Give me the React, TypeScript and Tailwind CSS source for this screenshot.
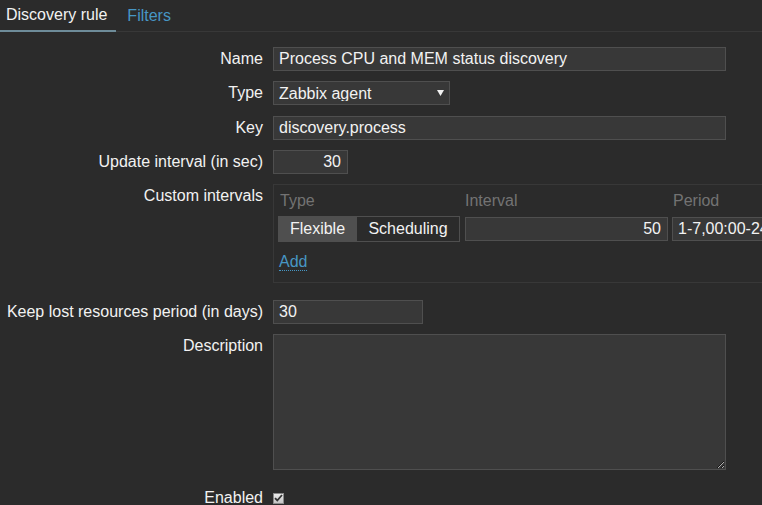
import React from "react";

function Row({
  label,
  children,
  className = "",
  labelClass = "h-[24px] leading-[24px]",
}: {
  label: string;
  children: React.ReactNode;
  className?: string;
  labelClass?: string;
}) {
  return (
    <div className={"flex " + className}>
      <div className={"w-[263px] shrink-0 text-right whitespace-nowrap " + labelClass}>{label}</div>
      <div className="ml-[10px] shrink-0">{children}</div>
    </div>
  );
}

const inputCls =
  "h-[24px] border border-[#4f4f4f] bg-[#383838] px-[5px] text-[16px] text-[#f2f2f2] outline-none font-['Liberation_Sans',Arial,sans-serif]";

export default function App() {
  return (
    <div className="w-[762px] h-[505px] overflow-hidden bg-[#2b2b2b] text-[#f2f2f2] text-[16px] font-['Liberation_Sans',Arial,sans-serif]">
      {/* Tabs */}
      <div className="flex border-b border-[#383838]">
        <div className="h-[32px] -mb-px flex items-center pl-[6px] pr-[9px] border-b-2 border-[#6e8c99] text-[#f2f2f2]">
          Discovery rule
        </div>
        <div className="h-[32px] -mb-px flex items-center pl-[11px] pr-[9px] text-[#4796c4]">Filters</div>
      </div>

      <div className="pt-[15px]">
        <Row label="Name" className="mb-[10px]">
          <input readOnly value="Process CPU and MEM status discovery" className={inputCls + " w-[453px]"} />
        </Row>

        <Row label="Type" className="mb-[11px]">
          <div className="relative h-[24px] w-[177px] border border-[#4f4f4f] bg-[#383838] px-[5px]">
            <div className="h-[19px] overflow-hidden pt-[3px] leading-[18px] whitespace-nowrap">Zabbix agent</div>
            <svg className="absolute left-[163px] top-[8px]" width="7" height="6" viewBox="0 0 7 6">
              <path d="M0 0 H7 L3.5 6 Z" fill="#f2f2f2" />
            </svg>
          </div>
        </Row>

        <Row label="Key" className="mb-[10px]">
          <input readOnly value="discovery.process" className={inputCls + " w-[453px]"} />
        </Row>

        <Row label="Update interval (in sec)" className="mb-[10px]">
          <input readOnly value="30" className={inputCls + " w-[75px] text-right pr-[6px]"} />
        </Row>

        <Row label="Custom intervals" className="mb-[17px]" labelClass="leading-[24px]">
          <div className="w-[560px] h-[99px] border border-[#383838] pl-[4px] pt-[7px]">
            <div className="flex h-[18px] leading-[18px] text-[#737373]">
              <div className="w-[187px] pl-[2px]">Type</div>
              <div className="w-[207px]">Interval</div>
              <div className="pl-[1px]">Period</div>
            </div>
            <div className="mt-[6px] flex items-center h-[26px]">
              <div className="flex h-[26px]">
                <div className="w-[79px] h-[26px] flex items-center justify-center bg-[#4f4f4f] border border-[#4f4f4f]">
                  Flexible
                </div>
                <div className="w-[103px] h-[26px] flex items-center justify-center bg-[#2b2b2b] border border-[#4f4f4f] border-l-0">
                  Scheduling
                </div>
              </div>
              <input readOnly value="50" className={inputCls + " ml-[5px] w-[203px] text-right pr-[6px]"} />
              <input readOnly value="1-7,00:00-24:00" className={inputCls + " ml-[4px] w-[160px]"} />
            </div>
            <div className="mt-[11px] h-[18px] leading-[18px] pl-[1px]">
              <span className="text-[#4796c4] border-b border-dotted border-[#4796c4]">Add</span>
            </div>
          </div>
        </Row>

        <Row label="Keep lost resources period (in days)" className="mb-[10px]">
          <input readOnly value="30" className={inputCls + " w-[150px]"} />
        </Row>

        <Row label="Description" className="mb-[16px]">
          <textarea
            readOnly
            value=""
            className="block w-[453px] h-[136px] border border-[#4f4f4f] bg-[#383838] px-[5px] text-[16px] text-[#f2f2f2] outline-none resize-y"
          />
        </Row>

        <Row label="Enabled">
          <div className="h-[24px] flex items-center">
            <div className="w-[11px] h-[11px] border border-[#8a8a8a] bg-gradient-to-b from-[#ececec] to-[#c4c4c4] flex items-center justify-center">
              <svg width="9" height="8" viewBox="0 0 9 8">
                <path d="M1 4.2 L3.3 6.5 L8 1" stroke="#333" strokeWidth="1.8" fill="none" />
              </svg>
            </div>
          </div>
        </Row>
      </div>
    </div>
  );
}
